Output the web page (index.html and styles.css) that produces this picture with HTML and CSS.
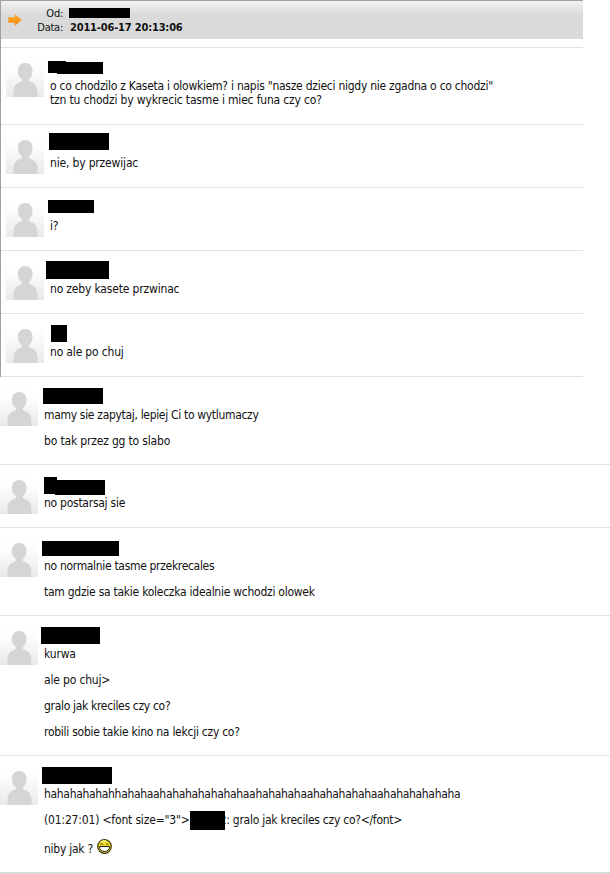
FILE: index.html
```html
<!DOCTYPE html>
<html lang="pl">
  <head>
    <meta charset="UTF-8" />
    <meta name="viewport" content="width=device-width, initial-scale=1.0" />
    <title>Archiwum</title>
    <link rel="stylesheet" href="styles.css">
  </head>
  <body>
    <svg class="defs" width="0" height="0">
      <defs>
        <linearGradient id="shade" x1="0" y1="0" x2="0" y2="1">
          <stop offset="0" stop-color="#fff" />
          <stop offset="0.3" stop-color="#fcfcfc" />
          <stop offset="1" stop-color="#e9e9e9" />
        </linearGradient>
        <symbol id="person" viewBox="0 0 38 38">
          <rect width="38" height="38" fill="url(#shade)" />
          <path fill="#d5d5d5" d="M19.200 4c4.600 0 7.300 3.200 7.300 8 0 4-1.700 6.800-3.700 8.500 0 1.500.5 2 2 2.400 4 1.100 6.700 4.600 6.700 9.600V38H7.500v-5.500c0-5 2.700-8.500 6.700-9.600 1.500-.4 2-.9 2-2.400-2.500-1.700-4.300-4.500-4.300-8.500 0-4.800 2.700-8 7.300-8z" />
        </symbol>
      </defs>
    </svg>
    <section class="archive">
      <header class="head">
        <svg class="arrow" width="14" height="12" viewBox="0 0 14 12">
          <defs>
            <linearGradient id="orange" x1="0" y1="0" x2="0" y2="1">
              <stop offset="0" stop-color="#ffb52e" />
              <stop offset="1" stop-color="#f57c00" />
            </linearGradient>
          </defs>
          <path d="M.5 3.500h6.500V.5L13.500 6 7 11.500v-3H.5z" fill="url(#orange)" stroke="#f0a040" stroke-width=".6" />
        </svg>
        <div class="labels">
          <div>Od:</div>
          <div>Data:</div>
        </div>
        <div class="values">
          <div class="sender"></div>
          <div class="date">2011-06-17 20:13:06</div>
        </div>
      </header>
      <article class="row first">
        <svg class="avatar"><use href="#person" /></svg>
        <i class="bar b1a"></i><i class="bar b1b"></i>
        <div class="text">
          <p>o co chodzilo z Kaseta i olowkiem? i napis "nasze dzieci nigdy nie zgadna o co chodzi"<br><span class="loose">tzn tu chodzi by wykrecic tasme i miec funa czy co?</span></p>
        </div>
      </article>
      <article class="row short">
        <svg class="avatar"><use href="#person" /></svg>
        <i class="bar b2"></i>
        <div class="text"><p class="loose">nie, by przewijac</p></div>
      </article>
      <article class="row short">
        <svg class="avatar"><use href="#person" /></svg>
        <i class="bar b3"></i>
        <div class="text"><p>i?</p></div>
      </article>
      <article class="row short">
        <svg class="avatar"><use href="#person" /></svg>
        <i class="bar b4"></i>
        <div class="text"><p class="loose">no zeby kasete przwinac</p></div>
      </article>
      <article class="row short">
        <svg class="avatar"><use href="#person" /></svg>
        <i class="bar b5"></i>
        <div class="text"><p class="loose">no ale po chuj</p></div>
      </article>
    </section>
    <section class="more">
      <article class="row double">
        <svg class="avatar"><use href="#person" /></svg>
        <i class="bar b6"></i>
        <div class="text">
          <p class="tight">mamy sie zapytaj, lepiej Ci to wytlumaczy</p>
          <p class="loose">bo tak przez gg to slabo</p>
        </div>
      </article>
      <article class="row short">
        <svg class="avatar"><use href="#person" /></svg>
        <i class="bar b7a"></i><i class="bar b7b"></i>
        <div class="text"><p>no postarsaj sie</p></div>
      </article>
      <article class="row double">
        <svg class="avatar"><use href="#person" /></svg>
        <i class="bar b8"></i>
        <div class="text">
          <p class="tight">no normalnie tasme przekrecales</p>
          <p>tam gdzie sa takie koleczka idealnie wchodzi olowek</p>
        </div>
      </article>
      <article class="row long">
        <svg class="avatar"><use href="#person" /></svg>
        <i class="bar b9"></i>
        <div class="text">
          <p class="loose">kurwa</p>
          <p class="loose">ale po chuj&gt;</p>
          <p class="tight">gralo jak kreciles czy co?</p>
          <p>robili sobie takie kino na lekcji czy co?</p>
        </div>
      </article>
      <article class="row last">
        <svg class="avatar"><use href="#person" /></svg>
        <i class="bar b10"></i>
        <div class="text">
          <p class="tight">hahahahahahhahahaahahahahahahahaahahahahaahahahahahaahahahahahaha</p>
          <p class="quote"><span class="loose">(01:27:01) &lt;font size="3"&gt;</span><i class="nick"></i><span class="rest">2: gralo jak kreciles czy co?&lt;/font&gt;</span></p>
          <p class="smile"><span>niby jak ?</span>
            <svg width="15" height="15" viewBox="0 0 15 15">
              <circle cx="7.500" cy="7.500" r="6.800" fill="#f3dc25" stroke="#3b3608" stroke-width="1.200" />
              <path d="M3.500 3.200q3-2 6-.8" fill="none" stroke="#fff9a0" stroke-width="1.200" />
              <path d="M3.500 5.500q1.300-1.500 2.600 0M8.900 5.500q1.300-1.500 2.600 0" fill="none" stroke="#4d4508" />
              <path d="M2.500 7.500h10c0 3.300-2 5-5 5s-5-1.700-5-5z" fill="#fff" stroke="#222" />
            </svg>
          </p>
        </div>
      </article>
    </section>
  </body>
</html>
```
FILE: styles.css
```css
* {
  box-sizing: border-box;
}
body {
  margin: 0;
  background-color: #fff;
  color: #111;
  font-family: "DejaVu Sans Condensed", "DejaVu Sans", sans-serif;
  font-stretch: condensed;
  font-size: 12px;
  line-height: 14px;
  letter-spacing: -0.26px;
  height: 874px;
  overflow: hidden;
}
.defs {
  position: absolute;
}
.archive {
  width: 583px;
  border-top: 1px solid #a0a0a0;
  border-left: 1px solid #a0a0a0;
}
.head {
  display: flex;
  height: 38px;
  padding-top: 6px;
  font-size: 11px;
  background: linear-gradient(#f2f2f2, #dadada 14px);
}
.arrow {
  margin: 7px 0 0 7px;
}
.labels {
  width: 41px;
  text-align: right;
}
.values {
  margin-left: 7px;
}
.sender {
  width: 61px;
  height: 10px;
  margin: 1px 0 3px -1px;
  background-color: #000;
}
.date {
  font-weight: bold;
  letter-spacing: -0.18px;
}
.row {
  position: relative;
  display: flex;
  border-bottom: 1px solid #e2e2e2;
}
.first {
  height: 78px;
  margin-top: 8px;
  border-top: 1px solid #e2e2e2;
}
.short {
  height: 63px;
}
.double {
  height: 88px;
}
.long {
  height: 140px;
}
.last {
  height: 118px;
  border-bottom: 2px solid #dadada;
}
.avatar {
  width: 38px;
  height: 38px;
  margin-top: 11px;
}
.archive .avatar {
  margin-left: 5px;
}
.text {
  padding: 31px 0 0 6px;
  white-space: nowrap;
}
p {
  margin: 0 0 12px;
}
.loose {
  letter-spacing: -0.17px;
}
.tight {
  letter-spacing: -0.32px;
}
.bar {
  position: absolute;
  background-color: #000;
}
.b1a { left: 47px; top: 13px; width: 18px; height: 12px; }
.b1b { left: 56px; top: 14px; width: 46px; height: 12px; }
.b2 { left: 48px; top: 8px; width: 60px; height: 17px; }
.b3 { left: 47px; top: 12px; width: 46px; height: 13px; }
.b4 { left: 45px; top: 10px; width: 63px; height: 18px; }
.b5 { left: 50px; top: 11px; width: 16px; height: 17px; }
.b6 { left: 43px; top: 11px; width: 60px; height: 16px; }
.b7a { left: 44px; top: 12px; width: 13px; height: 17px; }
.b7b { left: 55px; top: 15px; width: 50px; height: 15px; }
.b8 { left: 42px; top: 13px; width: 77px; height: 15px; }
.b9 { left: 41px; top: 11px; width: 59px; height: 17px; }
.b10 { left: 42px; top: 11px; width: 70px; height: 17px; }
.quote {
  display: flex;
}
.nick {
  z-index: 1;
  width: 35px;
  height: 19px;
  margin: -2px -5px -3px 0;
  background-color: #000;
}
.smile {
  display: flex;
  align-items: flex-start;
  gap: 4px;
}
.smile span {
  padding-top: 3px;
}
```
